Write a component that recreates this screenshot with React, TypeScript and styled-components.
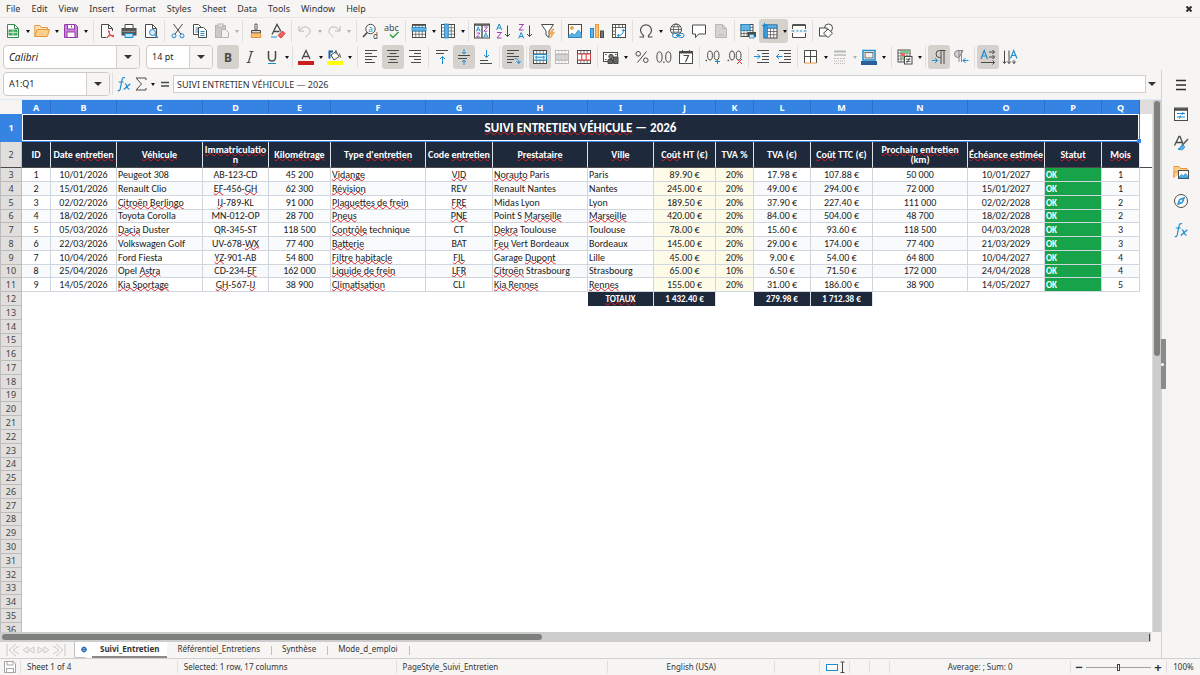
import React from "react";
import styled, { createGlobalStyle, css } from "styled-components";

/* ---------- theme values ---------- */

const INK = "#4a4a47";
const BLUE = "#1e8bcd";
const RED = "#e0383a";
const CHROME = "#f6f5f4";
const SELECT = "#3584e4";
const NAVY = "#1e293b";
const LINE = "#cfd6de";

const GlobalStyle = createGlobalStyle`
  * { box-sizing: border-box; }
  body {
    margin: 0;
    background: ${CHROME};
    color: #333;
    font: 9px/14px "Noto Sans", "Open Sans", sans-serif;
  }
  button, input {
    margin: 0;
    padding: 0;
    border: 0;
    background: none;
    color: inherit;
    font: inherit;
  }
  input:focus, button:focus { outline: none; }
`;

/* ---------- icons ---------- */

const Glyph = styled.svg`
  display: block;
  width: 16px;
  height: 16px;
  flex: none;
  overflow: visible;
  fill: none;
  stroke: ${INK};
  font-family: "Noto Sans", sans-serif;
`;

const Grid = ({ x = 1.5, y = 1.5, w = 13, h = 13, c = INK }) => (
  <>
    <rect x={x} y={y} width={w} height={h} fill="#fff" stroke={c} />
    <path
      d={`M${x} ${y + h / 4}h${w}M${x} ${y + h / 2}h${w}M${x} ${y + (3 * h) / 4}h${w}M${x + w / 4} ${y}v${h}M${x + w / 2} ${y}v${h}M${x + (3 * w) / 4} ${y}v${h}`}
      stroke={c}
      strokeWidth=".7"
    />
  </>
);

const lines = (rows: number[][]) => rows.map(([x, y, w]) => `M${x} ${y}h${w}`).join("");

const Decimals = ({ children }: { children: React.ReactNode }) => (
  <>
    <ellipse cx="5" cy="6.5" rx="2.4" ry="4.5" />
    <ellipse cx="11.6" cy="6.5" rx="2.4" ry="4.5" />
    <path d="M.6 11.5h1.3" strokeWidth="1.4" />
    {children}
  </>
);

const ICONS: Record<string, React.ReactNode> = {
  new: (
    <>
      <path d="M2.5 1.5h7l4 4v9h-11z" fill="#fff" stroke="#30904a" />
      <path d="M9.5 1.5v4h4" stroke="#30904a" />
      <rect x="4" y="7" width="8" height="5" fill="#54b567" stroke="#30904a" strokeWidth=".8" />
      <path d="M4 9.5h8M8 7v5" stroke="#d6f0da" strokeWidth=".8" />
    </>
  ),
  open: (
    <>
      <path d="M.8 13.5v-11h5l1.5 2h6.2v3" fill="#fde3b0" stroke="#e8953f" />
      <path d="M.8 13.5l2.4-7h12.3l-2.2 7z" fill="#fad08b" stroke="#e8953f" />
    </>
  ),
  save: (
    <>
      <path d="M1.5 1.5h11l2 2v11h-13z" fill="#c886d4" stroke="#9a3bab" />
      <rect x="4.5" y="1.5" width="7" height="4.5" fill="#fff" stroke="#9a3bab" />
      <rect x="4" y="9" width="8" height="5.5" fill="#fff" stroke="#9a3bab" />
      <path d="M8.5 2.5v2" stroke="#9a3bab" />
    </>
  ),
  pdf: (
    <>
      <path d="M13.5 8V5.500l-4-4h-7v13h5" fill="#fafafa" />
      <path d="M9.5 1.5v4h4" />
      <path d="M9.500 7.500c.5 3.500 2.500 6 5.500 6.500M8 15c2.500-2.500 3-4.500 2-7.500M8 14.500c2-2 4-2.500 7-2" stroke={RED} />
    </>
  ),
  print: (
    <>
      <path d="M4 6V1.500h8V6" fill="#fff" />
      <rect x="1" y="5.500" width="14" height="6.500" fill="#5a5a58" stroke="#4d4d4b" />
      <path d="M1.500 8.500h13" stroke="#8f8f8d" />
      <path d="M4 10.500h8v4H4z" fill="#bfe0f5" stroke={BLUE} />
    </>
  ),
  preview: (
    <>
      <path d="M2.500 1.500h7l4 4v9h-11z" fill="#fff" />
      <path d="M9.500 1.500v4h4" />
      <circle cx="9.500" cy="9.500" r="3" fill="#d9ecf9" stroke={BLUE} />
      <path d="M11.800 11.800l3 3" stroke={BLUE} strokeWidth="1.400" />
    </>
  ),
  cut: (
    <>
      <path d="M3.500 1l7.500 10.200M12.500 1L5 11.200" />
      <circle cx="4" cy="12.800" r="2" stroke={BLUE} />
      <circle cx="12" cy="12.800" r="2" stroke={BLUE} />
    </>
  ),
  copy: (
    <>
      <path d="M1.500 1.500h5l3 3v7h-8z" fill="#fff" />
      <path d="M3.500 5h3M3.500 7h3M3.500 9h3" stroke={BLUE} />
      <path d="M6.500 4.500h5l3 3v7h-8z" fill="#fff" />
      <path d="M8.500 8.500h4M8.500 10.500h4M8.500 12.500h4" stroke={BLUE} />
    </>
  ),
  paste: (
    <g stroke="#b5b4b2">
      <rect x="1.500" y="2.500" width="10" height="12" fill="#cbcac8" />
      <rect x="4" y="1" width="5" height="3" fill="#e9e8e6" />
      <path d="M7.500 6.500h4l3 3v5h-7z" fill="#f3f2f1" />
    </g>
  ),
  brush: (
    <>
      <path d="M7 1h2v6H7z" fill="#fff" strokeWidth=".9" />
      <path d="M3.500 7.500h9v2.500h-9z" fill="#d8d7d5" />
      <path d="M3.500 10.500h9l.5 4h-10z" fill="#fbc177" stroke="#e8953f" />
    </>
  ),
  clear: (
    <>
      <path d="M2 11.500L7 1.500l4 7M4 8.500h5.500" strokeWidth="1.300" />
      <path d="M1 14h6" stroke={BLUE} />
      <path d="M8 12.500l4.500-4.500 2.500 2.500-4 4.500z" fill="#ef6460" stroke={RED} />
    </>
  ),
  undo: <path d="M2 3v5h5M2.300 7.800C5 3 12 2.500 13 7.500c.5 3-2 4.500-4.500 6.500" stroke="#b9b8b6" />,
  redo: <path d="M14 3v5H9M13.700 7.800C11 3 4 2.500 3 7.500c-.5 3 2 4.500 4.500 6.500" stroke="#b9b8b6" />,
  find: (
    <>
      <circle cx="8.500" cy="6" r="4.700" fill="#fff" />
      <path d="M5.200 9.500L1 14" strokeWidth="1.600" />
      <text x="6.200" y="8.500" fontSize="8" fill={BLUE} stroke="none">a</text>
      <text x="11" y="15.500" fontSize="8" fill={INK} stroke="none">d</text>
    </>
  ),
  spell: (
    <>
      <text x="0" y="8" fontSize="9" fill={INK} stroke="none">abc</text>
      <path d="M6 11.500l3 3L14.500 9" stroke="#2f9e4a" strokeWidth="1.400" />
    </>
  ),
  row: (
    <>
      <Grid />
      <rect x="1" y="4.500" width="14" height="3.500" fill="#63b3e4" stroke={BLUE} strokeWidth=".8" />
      <path d="M1 2h14" strokeWidth="1.600" />
    </>
  ),
  column: (
    <>
      <Grid />
      <rect x="4.700" y="1" width="3.500" height="14" fill="#63b3e4" stroke={BLUE} strokeWidth=".8" />
    </>
  ),
  sort: (
    <>
      <rect x=".5" y="1" width="15" height="14" fill="#fff" />
      <path d="M.5 2h15M8 2v13" strokeWidth="1.400" />
      <g strokeWidth=".9">
        <path d="M2.300 8.500L4.200 3.800 6.200 8.500M3 7h2.500" stroke={BLUE} />
        <path d="M2.500 10h3.500l-3.500 4H6" stroke="#a33ab1" />
        <path d="M10 4h3.500L10 8.200h3.500" stroke="#a33ab1" />
        <path d="M9.800 14.300l2-4.700 2 4.700M10.500 13h2.500" stroke={BLUE} />
      </g>
    </>
  ),
  asc: (
    <>
      <path d="M.6 7L3.200 1l2.600 6M1.500 5h3.400" stroke={BLUE} />
      <path d="M1 9.500h4.500L1 15h4.500" stroke="#a33ab1" />
      <path d="M11.500 2.500v11M9 11l2.500 2.500L14 11" />
    </>
  ),
  desc: (
    <>
      <path d="M1 1.500h4.500L1 7h4.500" stroke="#a33ab1" />
      <path d="M.6 15.500l2.600-6 2.600 6M1.500 13.500h3.400" stroke={BLUE} />
      <path d="M11.500 2.500v11M9 11l2.500 2.500L14 11" />
    </>
  ),
  filter: (
    <>
      <path d="M1.500 1.500h12L9 8v6.500L6 12V8z" fill="#fff" />
      <path d="M12.500 6L9 11h2.500l-1 4L14.500 9.500H12L14 6z" fill="#fbb04c" stroke="#e8953f" strokeWidth=".6" />
    </>
  ),
  image: (
    <>
      <rect x="1.500" y="1.500" width="13" height="13" fill="#fff" />
      <circle cx="5" cy="5" r="1.400" fill="#fbc177" stroke="#e8953f" />
      <path d="M1.500 13l3.500-3 2.500 2 4-5 3 4v3.500h-13z" fill="#5fb0e2" stroke={BLUE} strokeWidth=".7" />
    </>
  ),
  chart: (
    <>
      <rect x="1.500" y="5.500" width="3" height="9" fill="#63b3e4" stroke={BLUE} />
      <rect x="6.500" y="1.500" width="3" height="13" fill="#fbc177" stroke="#e8953f" />
      <rect x="11.500" y="8" width="3" height="6.500" fill="#777" />
    </>
  ),
  pivot: (
    <>
      <rect x="1.500" y="1.500" width="13" height="13" fill="#fff" />
      <path d="M1.500 4.500h13M4.500 1.500v13M8 1.500v3M11.500 1.500v3M1.500 8h3M1.500 11.500h3" strokeWidth=".8" />
      <path d="M6.500 12.500c4 0 6-2 6-6M10.800 8l1.700-1.700L14 8M8 11l-1.700 1.500L8 14" stroke={BLUE} />
    </>
  ),
  omega: <path d="M1.500 14h4v-1.500C3.500 11 2.500 9.300 2.500 7.300a5.500 5.500 0 0 1 11 0c0 2-1 3.700-3 5.200V14h4" strokeWidth="1.200" />,
  link: (
    <>
      <circle cx="7" cy="6.500" r="5.500" fill="#fff" />
      <ellipse cx="7" cy="6.500" rx="2.500" ry="5.500" strokeWidth=".8" />
      <path d="M1.500 6.500h11M2.500 3.800h9M2.500 9.200h9" strokeWidth=".8" />
      <g stroke={BLUE}>
        <rect x="3.500" y="10.500" width="5.500" height="4" rx="2" fill={CHROME} />
        <rect x="9.500" y="10.500" width="5.500" height="4" rx="2" fill={CHROME} />
        <path d="M7 12.500h5" />
      </g>
    </>
  ),
  comment: <path d="M1.500 2h13v9h-7L4.500 14.500V11h-3z" fill="#fff" />,
  header: (
    <g stroke="#b9b8b6">
      <path d="M2.500 1.500h7l4 4v9h-11z" fill="#d5d4d2" />
      <path d="M9.500 1.500v4h4M5 12h6" />
    </g>
  ),
  area: (
    <>
      <Grid x={1} y={1.5} w={12} h={12} />
      <rect x="1" y="1.500" width="9" height="6" fill="#63b3e4" stroke={BLUE} strokeWidth=".8" />
      <rect x="8" y="9.500" width="7.500" height="4" fill="#4d4d4b" />
      <rect x="9.500" y="11.500" width="4.500" height="3.500" fill="#cfe6f6" stroke={BLUE} strokeWidth=".8" />
    </>
  ),
  freeze: (
    <>
      <Grid x={2} y={2} w={13} h={13} />
      <rect x="2" y="2" width="12.500" height="3" fill="#63b3e4" stroke={BLUE} strokeWidth=".8" />
      <rect x="2" y="2" width="3.300" height="12.500" fill="#3d9bd8" stroke={BLUE} strokeWidth=".8" />
      <path d="M0 2.500h5M2.500 0v5" stroke={BLUE} />
    </>
  ),
  split: (
    <>
      <path d="M1.500 6V2h13v4M1.500 10v4.500h13V10" fill="#fff" />
      <path d="M1.500 2h13" strokeWidth="1.800" />
      <path d="M.5 8h3M5.500 8h2M9 8h2M12.500 8h3" stroke={BLUE} />
    </>
  ),
  shapes: (
    <>
      <circle cx="10.500" cy="5" r="4" fill="#fff" />
      <rect x="1.500" y="5" width="7.500" height="8" fill="#fff" />
      <path d="M10 6l4.500 4.200L10 14.500l-4.500-4.300z" fill="#fff" />
    </>
  ),
  bold: <text x="4" y="12.500" fontSize="12" fontWeight="700" fill={INK} stroke="none">B</text>,
  italic: <path d="M7.500 2.500h4M4.500 13.500h4M9.800 2.500l-3.400 11" strokeWidth="1.200" />,
  underline: (
    <>
      <path d="M4.500 2v6.500a3.500 3.500 0 0 0 7 0V2" strokeWidth="1.500" />
      <path d="M4 14.500h8" stroke={BLUE} />
    </>
  ),
  fontColor: (
    <>
      <path d="M4 10L8 1.500 12 10M5.300 7.500h5.400" strokeWidth="1.300" />
      <rect x="0" y="12" width="16" height="4" fill="#c8201f" stroke="none" />
    </>
  ),
  highlight: (
    <>
      <path d="M4 6l5-3.500 3 5-5 3.500z" fill="#fff" />
      <path d="M2.500 9.500V2.500h3.500" stroke="#1c5f9c" strokeWidth="2" />
      <path d="M9 1v4M12.500 4.500l1 4" />
      <rect x="0" y="12" width="16" height="4" fill="#ffff10" stroke="none" />
    </>
  ),
  left: <path d={lines([[2, 1.5, 12], [2, 4.5, 7], [2, 7.5, 12], [2, 10.5, 7], [2, 13.5, 10]])} />,
  center: <path d={lines([[2, 1.5, 12], [4.5, 4.5, 7], [2, 7.5, 12], [4.5, 10.5, 7], [3, 13.5, 10]])} />,
  right: <path d={lines([[2, 1.5, 12], [7, 4.5, 7], [2, 7.5, 12], [7, 10.5, 7], [4, 13.5, 10]])} />,
  top: (
    <>
      <path d={lines([[2, 1.5, 12], [2, 4.5, 8]])} />
      <path d="M8.500 15V7.500M6 10l2.500-2.500L11 10" stroke={BLUE} />
    </>
  ),
  middle: (
    <>
      <path d={lines([[2, 6.5, 12], [2, 9.5, 9]])} />
      <path d="M8 0v5M6 3l2 2 2-2M8 16v-5M6 13l2-2 2 2" stroke={BLUE} />
    </>
  ),
  bottom: (
    <>
      <path d={lines([[2, 11.5, 8], [2, 14.5, 12]])} />
      <path d="M8.500 1v7.500M6 6l2.500 2.500L11 6" stroke={BLUE} />
    </>
  ),
  wrap: (
    <>
      <path d={lines([[2, 1.5, 12], [2, 4.5, 7], [2, 7.5, 12], [2, 10.5, 7], [2, 13.5, 5]])} />
      <path d="M9.500 9.500c3 0 4 1 4.500 4.500M11.500 12.500l2.500 2 1.500-2.500" stroke={BLUE} />
    </>
  ),
  merge: (
    <>
      <Grid />
      <rect x="1.500" y="5.500" width="13" height="5.500" fill="#eaf5fc" stroke={BLUE} />
      <path d="M3.500 8.200h9M5 6.800L3.500 8.200 5 9.600M11 6.800l1.500 1.400L11 9.600" stroke={BLUE} />
    </>
  ),
  mergeOff: (
    <>
      <Grid c="#b9b8b6" />
      <rect x="1.500" y="5.500" width="13" height="5.500" fill="#d5d4d2" stroke="#b9b8b6" />
    </>
  ),
  unmerge: (
    <>
      <Grid />
      <path d="M1.500 5h13v6h-13zM5.800 5v6M10.200 5v6" fill="#fff" stroke={RED} />
    </>
  ),
  currency: (
    <>
      <rect x=".5" y="3.500" width="14" height="9" fill="#fff" />
      <circle cx="8" cy="7.500" r="2.200" fill="#777" />
      <path d="M2 5.500h1.500M2 10.500h1.500M12 5.500h1.500" />
      <path d="M5 10.500h4.500v4H5zM10.500 8h4.500v6.500h-4.500z" fill="#666" />
    </>
  ),
  percent: (
    <>
      <circle cx="4.200" cy="4.800" r="2.300" />
      <circle cx="11.800" cy="11.200" r="2.300" />
      <path d="M12.500 2.500l-9 11" />
    </>
  ),
  number: (
    <>
      <ellipse cx="3.500" cy="8" rx="2.600" ry="5.200" />
      <ellipse cx="12.300" cy="8" rx="2.600" ry="5.200" />
      <path d="M7.300 13.200h1.200" strokeWidth="1.400" />
    </>
  ),
  date: (
    <>
      <rect x="1.500" y="2.500" width="13" height="12" fill="#fff" />
      <path d="M1.500 3.500h13" strokeWidth="2" />
      <path d="M4.500 1v2M11.500 1v2" />
      <path d="M5.500 6.500h5l-3 6.500" strokeWidth="1.200" />
    </>
  ),
  addDecimal: (
    <Decimals>
      <path d="M12.500 10v5M10 12.500h5" stroke={BLUE} />
    </Decimals>
  ),
  deleteDecimal: (
    <Decimals>
      <path d="M10 10l5 5M15 10l-5 5" stroke={RED} />
    </Decimals>
  ),
  indent: (
    <>
      <path d={lines([[3, 1.5, 12], [8, 4.5, 7], [8, 7.5, 7], [8, 10.5, 7], [3, 13.5, 12]])} />
      <path d="M0 7.500h6M3.500 5L6 7.500 3.500 10" stroke={BLUE} />
    </>
  ),
  outdent: (
    <>
      <path d={lines([[3, 1.5, 12], [8, 4.5, 7], [8, 7.5, 7], [8, 10.5, 7], [3, 13.5, 12]])} />
      <path d="M.5 7.500h6M3 5L.5 7.500 3 10" stroke={BLUE} />
    </>
  ),
  borders: (
    <>
      <path d="M1.500 14V1.500h12V14M7.500 1.500V14M1.500 7.500h12" fill="#fff" />
      <path d="M1.500 14h12" stroke="#e8953f" />
    </>
  ),
  borderStyle: (
    <g stroke="#b9b8b6">
      <path d="M2 2.500h12" strokeWidth="2" />
      <path d="M2 6h12" strokeWidth="1.500" />
      <path d="M2 9.500h12" strokeDasharray="2 1" />
      <path d="M2 12h12M2 14.500h12" strokeDasharray="1 1" />
    </g>
  ),
  borderColor: (
    <>
      <rect x="2" y="1.500" width="12" height="9.500" fill="#fff" stroke={BLUE} strokeWidth="1.500" />
      <rect x="4" y="3.500" width="8" height="5.500" fill="#f2f1f0" strokeWidth=".8" />
      <rect x="0" y="12" width="16" height="4" fill="#2a6099" stroke="none" />
    </>
  ),
  condition: (
    <>
      <Grid x={1} y={1} w={12} h={12} />
      <rect x="4" y="1.500" width="9" height="2.500" fill="#79c98a" stroke="none" />
      <rect x="4" y="4" width="4" height="3" fill="#ef6460" stroke="none" />
      <rect x="4" y="7" width="4" height="3" fill="#79c98a" stroke="none" />
      <rect x="7.500" y="7.500" width="7.500" height="7.500" fill="#fff" />
      <path d="M9 10.200h4.500M9 12.400h4.500M12.600 8.800l-2.700 5" strokeWidth=".9" />
    </>
  ),
  ltr: (
    <>
      <path d="M14.500 1.500H8.500a3.500 3.500 0 0 0 0 7h1.500M10 1.500V15M13 1.500V15" />
      <path d="M1 11.500h5.500M4 9l2.500 2.500L4 14" stroke={BLUE} />
    </>
  ),
  rtl: (
    <>
      <path d="M10 1.500H5a3.300 3.300 0 0 0 0 7h1zM6 1.500V13M8.500 1.500V13" fill="#d3d2d0" stroke="#888" />
      <path d="M15.500 11.500H10M12.500 9L10 11.500l2.500 2.500" stroke={BLUE} />
    </>
  ),
  horizontal: (
    <>
      <path d="M1 10L4.200 1.500 7.500 10M2.200 7h4.200" stroke={BLUE} strokeWidth="1.200" />
      <path d="M9 3h5.500M9 8h5.500M1 13.500h13.500M12.500 1l2 2-2 2M12.500 6l2 2-2 2M12.500 11.500l2 2-2 2" />
    </>
  ),
  vertical: (
    <>
      <path d="M8.500 9.500l3.200-8 3.300 8M9.700 6.500h4.200" stroke={BLUE} strokeWidth="1.200" />
      <path d="M2.500 1.500v13M7 1.500v13M12 11v3.500M.8 12.500l1.700 2 1.700-2M5.300 12.500l1.700 2 1.700-2M10.300 12.500l1.700 2 1.700-2" />
    </>
  ),
  fx: (
    <g stroke={BLUE}>
      <path d="M9 1.800c-2.200-.8-2.800.7-3.200 3L4.200 13c-.3 1.700-1.200 2-2.400 1.400M2.700 6h5" strokeWidth="1.200" />
      <path d="M8.800 8c2-.8 1.800 5.500 4.700 5.200M14.300 7.800L7.800 13.500" strokeWidth="1.200" />
    </g>
  ),
  sum: <path d="M13 4V2H3l5.500 6L3 14h10v-2" />,
  equal: <path d="M4 6.500h8M4 10h8" strokeWidth="1.600" />,
  menu: <path d="M3 3.500h10M3 8h10M3 12.500h10" stroke="#2e2e2c" strokeWidth="1.600" />,
  properties: (
    <>
      <rect x="1.500" y="2" width="13" height="12.500" fill="#fff" />
      <path d="M1.500 3.500h13" strokeWidth="2.500" />
      <path d="M4 7.500h8M10 6l-1 3M4 11h8M7.500 9.500l-1 3" stroke={BLUE} />
    </>
  ),
  styles: (
    <>
      <path d="M1.500 10.500L6 1.500h1l3 7.500M3.200 7.500h6" strokeWidth="1.300" />
      <path d="M15 4L9 10.500" strokeWidth="1.800" stroke="#666" />
      <path d="M9.500 10c-2.500.5-1.500 4-4.500 4 3 1.500 6.500.5 6.500-2.500z" fill="#63b3e4" stroke={BLUE} />
    </>
  ),
  gallery: (
    <>
      <path d="M1 13.500v-11h5l1.500 2h6.500v2" fill="#fad08b" stroke="#e8953f" />
      <path d="M1 13.500V8h5" fill="#fad08b" stroke="#e8953f" />
      <rect x="5.500" y="6.500" width="10" height="8" fill="#fff" />
      <path d="M6 13l2.500-2.500L10.500 12l2-2.500 2.500 3v1.500H6z" fill="#5fb0e2" stroke={BLUE} strokeWidth=".7" />
    </>
  ),
  navigator: (
    <>
      <circle cx="8" cy="8" r="6.500" fill="#fff" />
      <path d="M11.500 4.500l-2 5.300-5 1.700 2-5.200z" fill="#5fb0e2" stroke={BLUE} />
      <circle cx="8" cy="8" r="1" fill="#fff" stroke="none" />
    </>
  ),
  disk: (
    <g stroke="#a5a4a2">
      <path d="M2.500 2.500h9l2 2v9h-11z" fill="#fff" />
      <path d="M5 2.500V6h6V2.500M4.500 13.500v-4h7v4" />
    </g>
  ),
  close: <path d="M5.500 5.500l5 5M10.500 5.500l-5 5" stroke="#2e2e2c" strokeWidth="2" />,
  first: <path d="M3 2v12M12 2L5 8l7 6M15 4L9 8l6 4" />,
  previous: <path d="M8 5L3 8l5 3zM14 5L9 8l5 3z" />,
  next: <path d="M2 5l5 3-5 3zM8 5l5 3-5 3z" />,
  last: <path d="M13 2v12M4 2l7 6-7 6M1 4l6 4-6 4" />,
  addSheet: (
    <>
      <path d="M.5 0v15.500h11" stroke="#c4c3c1" />
      <circle cx="10" cy="7.500" r="2" fill="#fff" stroke="#2a6fbd" strokeWidth="1.300" />
      <path d="M10 4.500v6M7 7.500h6" stroke="#2a6fbd" strokeWidth=".8" />
    </>
  ),
  cursor: (
    <>
      <rect x="0.500" y="5.500" width="11" height="6" fill="#fff" stroke={BLUE} />
      <path d="M16.500 3v10.500M14.500 3h4M14.500 13.500h4" />
    </>
  ),
};

const Icon = ({ name }: { name: string }) => (
  <Glyph viewBox="0 0 16 16" aria-hidden="true">
    {ICONS[name]}
  </Glyph>
);

/* ---------- toolbar parts ---------- */

const Window = styled.div`
  display: flex;
  flex-direction: column;
  height: 100vh;
  overflow: hidden;
`;

const MenuBar = styled.nav`
  display: flex;
  align-items: center;
  height: 18px;
  padding: 0 3px 0 6px;
  border-bottom: 1px solid #e6e5e3;
`;

const MenuItem = styled.button`
  margin-right: 11px;
`;

const CloseButton = styled.button`
  margin-left: auto;
`;

const Toolbar = styled.div`
  display: flex;
  align-items: center;
  height: 26px;
  padding: 1px 2px;
`;

const ToolButton = styled.button<{ $on?: boolean; $joined?: boolean }>`
  display: flex;
  align-items: center;
  justify-content: center;
  flex: none;
  width: 22px;
  height: 24px;
  border-radius: ${(p) => (p.$joined ? "3px 0 0 3px" : "3px")};
  background: ${(p) => (p.$on ? "#d5d1cd" : "none")};
`;

const DropButton = styled.button<{ $wide?: boolean; $off?: boolean; $on?: boolean }>`
  display: flex;
  align-items: center;
  flex: none;
  width: ${(p) => (p.$wide ? 9 : 7)}px;
  height: 24px;
  padding-left: 2px;
  border-radius: 0 3px 3px 0;
  background: ${(p) => (p.$on ? "#d5d1cd" : "none")};
  opacity: ${(p) => (p.$off ? 0.3 : 1)};
  &::before {
    content: "";
    border: 2px solid transparent;
    border-top: 3px solid #111;
    border-bottom: 0;
  }
`;

const Separator = styled.span<{ $wide?: boolean }>`
  flex: none;
  width: 1px;
  height: 22px;
  margin: 0 2px 0 ${(p) => (p.$wide ? 4 : 2)}px;
  background: #e2e0de;
`;

const ComboBox = styled.div<{ $w: number }>`
  display: flex;
  flex: none;
  width: ${(p) => p.$w}px;
  height: 24px;
  border: 1px solid #cdc9c5;
  border-radius: 4px;
  background: #fff;
  overflow: hidden;
`;

const ComboInput = styled.input<{ $italic?: boolean }>`
  flex: 1;
  min-width: 0;
  padding-left: 5px;
  font-size: ${(p) => (p.$italic ? 10 : 9)}px;
  font-style: ${(p) => (p.$italic ? "italic" : "normal")};
  color: #1f1f1f;
`;

const ComboArrow = styled.button`
  display: flex;
  align-items: center;
  justify-content: center;
  width: 23px;
  border-left: 1px solid #d5d1cd;
  background: ${CHROME};
  &::before {
    content: "";
    border: 4px solid transparent;
    border-top: 4px solid #333;
    border-bottom: 0;
  }
`;

const FontBoxes = styled.div`
  display: flex;
  gap: 6px;
  margin: 0 4px 0 1px;
`;

type Tool =
  | "|"
  | "||"
  | { icon: string; label: string; on?: boolean; drop?: "narrow" | "wide"; off?: boolean };

const tool = (icon: string, label: string, extra: object = {}): Tool => ({ icon, label, ...extra });

const Tools = ({ items }: { items: Tool[] }) => (
  <>
    {items.map((t, i) =>
      typeof t === "string" ? (
        <Separator key={i} $wide={t === "||"} />
      ) : (
        <React.Fragment key={i}>
          <ToolButton aria-label={t.label} $on={t.on} $joined={Boolean(t.drop)}>
            <Icon name={t.icon} />
          </ToolButton>
          {t.drop && (
            <DropButton aria-label={`${t.label} options`} $wide={t.drop === "wide"} $off={t.off} $on={t.on} />
          )}
        </React.Fragment>
      ),
    )}
  </>
);

const narrow = { drop: "narrow" };
const wide = { drop: "wide" };

const STANDARD: Tool[] = [
  tool("new", "New", narrow), tool("open", "Open", narrow), tool("save", "Save", narrow), "||",
  tool("pdf", "Export as PDF"), tool("print", "Print"), tool("preview", "Print preview"), "|",
  tool("cut", "Cut"), tool("copy", "Copy"), tool("paste", "Paste", { ...narrow, off: true }), "|",
  tool("brush", "Clone formatting"), tool("clear", "Clear formatting"), "|",
  tool("undo", "Undo", { ...narrow, off: true }), tool("redo", "Redo", { ...narrow, off: true }), "||",
  tool("find", "Find and replace"), tool("spell", "Spelling"), "|",
  tool("row", "Row", narrow), tool("column", "Column", narrow), "|",
  tool("sort", "Sort"), tool("asc", "Sort ascending"), tool("desc", "Sort descending"), tool("filter", "AutoFilter"), "|",
  tool("image", "Insert image"), tool("chart", "Insert chart"), tool("pivot", "Insert pivot table"), "|",
  tool("omega", "Special character", wide), tool("link", "Hyperlink"), tool("comment", "Comment"), tool("header", "Headers and footers"), "|",
  tool("area", "Define print area"), tool("freeze", "Freeze rows and columns", { ...narrow, on: true }), tool("split", "Split window"), "|",
  tool("shapes", "Draw functions"),
];

const FORMATTING: Tool[] = [
  tool("bold", "Bold", { on: true }), tool("italic", "Italic"), tool("underline", "Underline", narrow), "|",
  tool("fontColor", "Font color", narrow), tool("highlight", "Background color", narrow), "||",
  tool("left", "Align left"), tool("center", "Align center", { on: true }), tool("right", "Align right"), "|",
  tool("top", "Align top"), tool("middle", "Center vertically", { on: true }), tool("bottom", "Align bottom"), "|",
  tool("wrap", "Wrap text", { on: true }), "|",
  tool("merge", "Merge and center", { on: true }), tool("mergeOff", "Merge cells"), tool("unmerge", "Unmerge cells"), "|",
  tool("currency", "Format as currency", wide), tool("percent", "Format as percent"), tool("number", "Format as number"), tool("date", "Format as date"), "|",
  tool("addDecimal", "Add decimal place"), tool("deleteDecimal", "Delete decimal place"), "|",
  tool("indent", "Increase indent"), tool("outdent", "Decrease indent"), "|",
  tool("borders", "Borders", narrow), tool("borderStyle", "Border style", { ...narrow, off: true }), tool("borderColor", "Border color", narrow), "||",
  tool("condition", "Conditional formatting", narrow), "|",
  tool("ltr", "Left to right", { on: true }), tool("rtl", "Right to left"), "|",
  tool("horizontal", "Text direction from left to right", { on: true }), tool("vertical", "Text direction from top to bottom"),
];

/* ---------- formula bar ---------- */

const Body = styled.div`
  display: flex;
  flex: 1;
  min-height: 0;
`;

const Work = styled.div`
  display: flex;
  flex: 1;
  flex-direction: column;
  min-width: 0;
`;

const FormulaBar = styled.div`
  display: flex;
  align-items: center;
  height: 30px;
  padding: 0 3px 1px;
  border-bottom: 1px solid #dfe8f8;
`;

const FormulaTools = styled.div`
  display: flex;
  align-items: center;
`;

const SlimButton = styled(ToolButton)`
  width: 17px;
`;

const FormulaInput = styled.input`
  flex: 1;
  min-width: 0;
  height: 18px;
  padding-left: 3px;
  border: 1px solid #d0cdca;
  background: #fff;
`;

const ExpandButton = styled(ComboArrow)`
  width: 12px;
  border-left: 0;
  background: none;
`;

/* ---------- sheet ---------- */

const SheetArea = styled.div`
  display: flex;
  flex: 1;
  min-height: 0;
`;

const SheetView = styled.div`
  flex: 1;
  min-width: 0;
  overflow: hidden;
  background: #fff;
`;

const Sheet = styled.table`
  width: 100%;
  table-layout: fixed;
  border-collapse: separate;
  border-spacing: 0;
  font: 10px/10px Carlito, Lato, sans-serif;
  color: #1c1c1c;
  th, td { padding: 0; }
`;

const Col = styled.col<{ $w?: number }>`
  ${(p) => p.$w && `width: ${p.$w}px;`}
`;

const Letter = styled.th`
  height: 14px;
  border-right: 1px solid #2a6fc9;
  background: ${SELECT};
  color: #fff;
  font: 700 9px/13px "Noto Sans", sans-serif;
`;

const HeaderFiller = styled.td`
  background: #dedddb;
`;

const Corner = styled.td`
  background: ${CHROME};
`;

const RowNumber = styled.th<{ $active?: boolean }>`
  border: solid #bdbcba;
  border-width: 0 1px 1px 1px;
  background: #e0dfdd;
  color: #444;
  font: 400 9px/12px "Noto Sans", sans-serif;
  ${(p) =>
    p.$active &&
    css`
      border-color: ${SELECT};
      background: ${SELECT};
      color: #fff;
      font-weight: 700;
    `}
`;

const TitleRow = styled.tr`
  height: 28px;
`;

const TitleCell = styled.td`
  position: relative;
  border: solid ${SELECT};
  border-width: 0 1px 1px 0;
  background: ${NAVY};
  box-shadow: inset 0 0 0 1px #fff;
  color: #fff;
  text-align: center;
  font-size: 13px;
  font-weight: 700;
  line-height: 16px;
`;

const FillHandle = styled.span`
  position: absolute;
  right: -2px;
  bottom: -2px;
  width: 4px;
  height: 4px;
  background: ${SELECT};
`;

const HeadingRow = styled.tr`
  height: 26px;
  & > * { border-bottom: 1px solid #4a4a4a; }
`;

const HeadingCell = styled.th`
  border-right: 1px solid #dfe3e8;
  background: ${NAVY};
  color: #fff;
  white-space: pre;
`;

const GridRows = styled.tbody`
  tr { height: 14px; }
  tr:nth-child(9n + 4), tr:nth-child(9n + 8) { height: 13px; }
`;

type Tone = "plain" | "input" | "status";

const Cell = styled.td<{ $even: boolean; $tone: Tone; $left?: boolean }>`
  && { padding-left: ${(p) => (p.$left ? 1 : 0)}px; }
  border: solid ${LINE};
  border-width: 0 1px 1px 0;
  background: ${(p) =>
    p.$tone === "input" ? "#fefbe8" : p.$tone === "status" ? "#16a34a" : p.$even ? "#f8fafc" : "#fff"};
  text-align: ${(p) => (p.$left ? "left" : "center")};
  white-space: nowrap;
  ${(p) =>
    p.$tone === "status" &&
    css`
      color: #fff;
      font-size: 9px;
      font-weight: 700;
    `}
`;

const TotalCell = styled.td`
  border-right: 1px solid #dfe3e8;
  background: ${NAVY};
  color: #fff;
  text-align: center;
  font-size: 9px;
  font-weight: 700;
`;

const Misspelled = styled.span`
  text-decoration: underline wavy #e01f1f 1px;
  text-decoration-skip-ink: none;
  text-underline-offset: -1px;
`;

/* Words in square brackets are the ones the spell checker flags. */
const Spelled = ({ text }: { text: string }) => (
  <>
    {text.split(/(\[[^\]]*\])/).map((part, i) =>
      part.startsWith("[") ? <Misspelled key={i}>{part.slice(1, -1)}</Misspelled> : part,
    )}
  </>
);

const COLUMNS: [string, number, string][] = [
  ["A", 29, "ID"],
  ["B", 66, "Date [entretien]"],
  ["C", 86, "[Véhicule]"],
  ["D", 66, "[Immatriculatio]\n[n]"],
  ["E", 62, "[Kilométrage]"],
  ["F", 95, "Type [d'entretien]"],
  ["G", 67, "Code [entretien]"],
  ["H", 95, "[Prestataire]"],
  ["I", 66, "[Ville]"],
  ["J", 62, "[Coût] HT (€)"],
  ["K", 38, "TVA %"],
  ["L", 57, "TVA (€)"],
  ["M", 62, "[Coût] TTC (€)"],
  ["N", 95, "[Prochain entretien]\n(km)"],
  ["O", 77, "[Échéance estimée]"],
  ["P", 57, "[Statut]"],
  ["Q", 38, "[Mois]"],
];

const LEFT_ALIGNED = "CFHIP";

const RECORDS = [
  "1|10/01/2026|Peugeot 308|AB-123-CD|45 200|[Vidange]|[VID]|[Norauto] Paris|Paris|89.90 €|20%|17.98 €|107.88 €|50 000|10/01/2027|OK|1",
  "2|15/01/2026|Renault Clio|[EF]-456-[GH]|62 300|[Révision]|REV|Renault Nantes|Nantes|245.00 €|20%|49.00 €|294.00 €|72 000|15/01/2027|OK|1",
  "3|02/02/2026|[Citroën Berlingo]|[IJ]-789-KL|91 000|[Plaquettes de frein]|[FRE]|Midas Lyon|Lyon|189.50 €|20%|37.90 €|227.40 €|111 000|02/02/2028|OK|2",
  "4|18/02/2026|Toyota Corolla|MN-012-OP|28 700|[Pneus]|[PNE]|Point S [Marseille]|[Marseille]|420.00 €|20%|84.00 €|504.00 €|48 700|18/02/2028|OK|2",
  "5|05/03/2026|[Dacia] Duster|QR-345-ST|118 500|[Contrôle] technique|CT|[Dekra] Toulouse|Toulouse|78.00 €|20%|15.60 €|93.60 €|118 500|04/03/2028|OK|3",
  "6|22/03/2026|Volkswagen Golf|UV-678-[WX]|77 400|[Batterie]|BAT|[Feu] Vert Bordeaux|Bordeaux|145.00 €|20%|29.00 €|174.00 €|77 400|21/03/2029|OK|3",
  "7|10/04/2026|Ford Fiesta|[YZ]-901-AB|54 800|[Filtre habitacle]|[FIL]|Garage [Dupont]|Lille|45.00 €|20%|9.00 €|54.00 €|64 800|10/04/2027|OK|4",
  "8|25/04/2026|Opel [Astra]|CD-234-[EF]|162 000|[Liquide de frein]|[LFR]|[Citroën] Strasbourg|Strasbourg|65.00 €|10%|6.50 €|71.50 €|172 000|24/04/2028|OK|4",
  "9|14/05/2026|[Kia Sportage]|[GH]-567-[IJ]|38 900|[Climatisation]|CLI|[Kia Rennes]|[Rennes]|155.00 €|20%|31.00 €|186.00 €|38 900|14/05/2027|OK|5",
].map((r) => r.split("|"));

const EMPTY_ROWS = Array.from({ length: 24 }, (_, i) => i + 13);

/* ---------- scroll bars, tabs, side bar, status bar ---------- */

const VerticalTrack = styled.div`
  width: 9px;
  padding: 1px 1px 0 1px;
  border-left: 1px solid #dcdcda;
  background: #cdcdcd;
`;

const VerticalThumb = styled.div`
  width: 6px;
  height: 48%;
  border-radius: 3px;
  background: #7e807e;
`;

const HorizontalTrack = styled.div`
  display: flex;
  justify-content: space-between;
  align-items: center;
  height: 10px;
  margin-right: 10px;
  padding: 0 1px 0 2px;
  background: #cdcdcd;
`;

const HorizontalThumb = styled.div`
  width: 47%;
  height: 6px;
  border-radius: 3px;
  background: #7e807e;
`;

const SplitGrip = styled.div`
  width: 1px;
  height: 7px;
  background: #444;
`;

const TabBar = styled.div`
  display: flex;
  align-items: stretch;
  height: 16px;
  padding-left: 4px;
`;

const TabArrows = styled.div`
  display: flex;
  align-items: center;
  width: 70px;
  opacity: 0.25;
`;

const AddSheet = styled.button`
  width: 18px;
  background: #fff;
`;

const Tab = styled.button<{ $on?: boolean }>`
  padding: 0 ${(p) => (p.$on ? 8 : 12)}px 2px ${(p) => (p.$on ? 8 : 10)}px;
  font-size: 8px;
  line-height: 14px;
  ${(p) =>
    p.$on
      ? css`
          padding-bottom: 0;
          border-bottom: 2px solid #8a8a88;
          background: #fff;
          font-weight: 700;
        `
      : css`
          background: linear-gradient(#c0bfbd, #c0bfbd) right center / 1px 9px no-repeat;
        `}
`;

const SideBar = styled.aside`
  position: relative;
  display: flex;
  flex-direction: column;
  align-items: center;
  width: 39px;
  border-left: 1px solid #d6d4d2;
`;

const SideButton = styled.button`
  height: 29px;
  width: 29px;
  display: flex;
  align-items: center;
  justify-content: center;
`;

const SideGrip = styled.span`
  position: absolute;
  left: -1px;
  top: calc(50% - 25px);
  display: flex;
  align-items: center;
  width: 5px;
  height: 50px;
  background: #8b8b89;
  &::before {
    content: "";
    width: 3px;
    height: 3px;
    border-radius: 50%;
    background: #fff;
  }
`;

const StatusBar = styled.footer`
  display: flex;
  align-items: center;
  height: 17px;
  border-top: 1px solid #d2d0ce;
  font-size: 8px;
`;

const Status = styled.div<{ $w: number; $fixed?: boolean; $center?: boolean }>`
  display: flex;
  align-items: center;
  justify-content: ${(p) => (p.$center ? "center" : "flex-start")};
  flex: ${(p) => (p.$fixed ? "0 0" : "1 1")} ${(p) => p.$w}px;
  height: 12px;
  padding-left: ${(p) => (p.$center ? 0 : 6)}px;
  border-right: 1px solid #e0dedc;
  white-space: nowrap;
  &:last-child { border-right: 0; }
`;

const CursorGlyph = styled(Glyph)`
  width: 20px;
`;

const ZoomButton = styled.button`
  width: 10px;
  font-size: 13px;
  font-weight: 700;
  line-height: 12px;
`;

const ZoomSlider = styled.input`
  appearance: none;
  width: 65px;
  height: 12px;
  margin: 0 2px;
  background: linear-gradient(#a3a2a0, #a3a2a0) center / 100% 1px no-repeat;
  &::-webkit-slider-thumb {
    appearance: none;
    width: 3px;
    height: 7px;
    border: 1px solid #444;
    background: #fff;
  }
`;

const MENUS = ["File", "Edit", "View", "Insert", "Format", "Styles", "Sheet", "Data", "Tools", "Window", "Help"];
const SIDE = ["menu", "properties", "styles", "gallery", "navigator", "fx"];

export default function App() {
  return (
    <Window>
      <GlobalStyle />
      <MenuBar>
        {MENUS.map((m) => (
          <MenuItem key={m}>{m}</MenuItem>
        ))}
        <CloseButton aria-label="Close document">
          <Icon name="close" />
        </CloseButton>
      </MenuBar>
      <Toolbar role="toolbar" aria-label="Standard">
        <Tools items={STANDARD} />
      </Toolbar>
      <Toolbar role="toolbar" aria-label="Formatting">
        <FontBoxes>
          <ComboBox $w={137}>
            <ComboInput aria-label="Font name" defaultValue="Calibri" $italic />
            <ComboArrow aria-label="Choose font name" />
          </ComboBox>
          <ComboBox $w={67}>
            <ComboInput aria-label="Font size" defaultValue="14 pt" />
            <ComboArrow aria-label="Choose font size" />
          </ComboBox>
        </FontBoxes>
        <Tools items={FORMATTING} />
      </Toolbar>

      <Body>
        <Work>
          <FormulaBar>
            <ComboBox $w={107}>
              <ComboInput aria-label="Name box" defaultValue="A1:Q1" />
              <ComboArrow aria-label="Choose named range" />
            </ComboBox>
            <FormulaTools>
              <Separator />
              <SlimButton aria-label="Function wizard">
                <Icon name="fx" />
              </SlimButton>
              <SlimButton aria-label="Select function">
                <Icon name="sum" />
              </SlimButton>
              <DropButton aria-label="Function options" />
              <SlimButton aria-label="Formula">
                <Icon name="equal" />
              </SlimButton>
            </FormulaTools>
            <FormulaInput aria-label="Input line" defaultValue="SUIVI ENTRETIEN VÉHICULE — 2026" />
            <ExpandButton aria-label="Expand formula bar" />
          </FormulaBar>

          <SheetArea>
            <SheetView>
              <Sheet>
                <colgroup>
                  <Col $w={22} />
                  {COLUMNS.map(([letter, w]) => (
                    <Col key={letter} $w={w} />
                  ))}
                  <Col />
                </colgroup>
                <thead>
                  <tr>
                    <Corner />
                    {COLUMNS.map(([letter]) => (
                      <Letter key={letter} scope="col">{letter}</Letter>
                    ))}
                    <HeaderFiller />
                  </tr>
                  <TitleRow>
                    <RowNumber scope="row" $active>1</RowNumber>
                    <TitleCell colSpan={17}>
                      <Spelled text="[SUIVI ENTRETIEN VÉHICULE] — 2026" />
                      <FillHandle />
                    </TitleCell>
                    <td />
                  </TitleRow>
                  <HeadingRow>
                    <RowNumber scope="row">2</RowNumber>
                    {COLUMNS.map(([letter, , title]) => (
                      <HeadingCell key={letter} scope="col">
                        <Spelled text={title} />
                      </HeadingCell>
                    ))}
                    <td />
                  </HeadingRow>
                </thead>
                <GridRows>
                  {RECORDS.map((record, r) => (
                    <tr key={record[0]}>
                      <RowNumber scope="row">{r + 3}</RowNumber>
                      {record.map((value, c) => {
                        const letter = COLUMNS[c][0];
                        return (
                          <Cell
                            key={letter}
                            $even={r % 2 === 1}
                            $tone={letter === "P" ? "status" : "JK".includes(letter) ? "input" : "plain"}
                            $left={LEFT_ALIGNED.includes(letter)}
                          >
                            <Spelled text={value} />
                          </Cell>
                        );
                      })}
                      <td />
                    </tr>
                  ))}
                  <tr>
                    <RowNumber scope="row">12</RowNumber>
                    <td colSpan={8} />
                    <TotalCell><Spelled text="[TOTAUX]" /></TotalCell>
                    <TotalCell>1 432.40 €</TotalCell>
                    <td />
                    <TotalCell>279.98 €</TotalCell>
                    <TotalCell>1 712.38 €</TotalCell>
                    <td colSpan={5} />
                  </tr>
                  {EMPTY_ROWS.map((n) => (
                    <tr key={n}>
                      <RowNumber scope="row">{n}</RowNumber>
                      <td colSpan={18} />
                    </tr>
                  ))}
                </GridRows>
              </Sheet>
            </SheetView>
            <VerticalTrack>
              <VerticalThumb />
            </VerticalTrack>
          </SheetArea>
          <HorizontalTrack>
            <HorizontalThumb />
            <SplitGrip />
          </HorizontalTrack>

          <TabBar>
            <TabArrows>
              {["first", "previous", "next", "last"].map((n) => (
                <Icon key={n} name={n} />
              ))}
            </TabArrows>
            <AddSheet aria-label="Add sheet">
              <Icon name="addSheet" />
            </AddSheet>
            <Tab $on>Suivi_Entretien</Tab>
            <Tab>Référentiel_Entretiens</Tab>
            <Tab>Synthèse</Tab>
            <Tab>Mode_d_emploi</Tab>
          </TabBar>
        </Work>

        <SideBar>
          {SIDE.map((name) => (
            <SideButton key={name} aria-label={name}>
              <Icon name={name} />
            </SideButton>
          ))}
          <SideGrip />
        </SideBar>
      </Body>

      <StatusBar>
        <Status $w={21} $fixed $center>
          <Icon name="disk" />
        </Status>
        <Status $w={157}>Sheet 1 of 4</Status>
        <Status $w={219}>Selected: 1 row, 17 columns</Status>
        <Status $w={212}>PageStyle_Suivi_Entretien</Status>
        <Status $w={167} $center>English (USA)</Status>
        <Status $w={45} $fixed />
        <Status $w={30} $fixed>
          <CursorGlyph viewBox="0 0 20 16">{ICONS.cursor}</CursorGlyph>
        </Status>
        <Status $w={20} $fixed />
        <Status $w={20} $fixed />
        <Status $w={181} $center>Average: ; Sum: 0</Status>
        <Status $w={96} $fixed $center>
          <ZoomButton aria-label="Zoom out">−</ZoomButton>
          <ZoomSlider type="range" aria-label="Zoom" min={0} max={100} defaultValue={50} />
          <ZoomButton aria-label="Zoom in">+</ZoomButton>
        </Status>
        <Status $w={33} $fixed $center>100%</Status>
      </StatusBar>
    </Window>
  );
}
